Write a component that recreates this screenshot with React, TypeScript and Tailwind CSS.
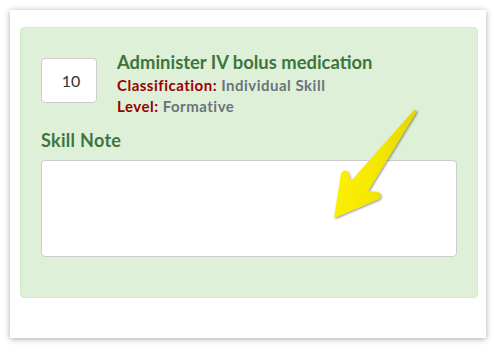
export default function App() {
  return (
    <div className="relative w-[496px] h-[348px] bg-white" style={{ fontFamily: "Lato, 'Noto Sans', sans-serif" }}>
      {/* outer card */}
      <div className="absolute left-[10px] top-[10px] w-[476px] h-[328px] bg-white shadow-[0_1px_6px_rgba(0,0,0,0.35)]">
        <div className="ml-[10px] mt-[17px] w-[458px] h-[271px] bg-[#dff0d8] border border-[#d6e9c6] rounded-[4px] px-[20px] pt-[22px]">
          <div className="flex gap-[20px]">
            <div className="mt-[8px] w-[56px] h-[45px] shrink-0 bg-white border border-[#cccccc] rounded-[4px] flex items-center justify-center pl-[4px] text-[16px] text-[#333333]">
              10
            </div>
            <div>
              <div className="text-[18.4px] leading-[24px] font-bold text-[#3c763d]">Administer IV bolus medication</div>
              <div className="text-[15px] leading-[21px] font-bold tracking-[0.5px] mt-[1px]">
                <span className="text-[#990000]">Classification:</span>{" "}
                <span className="text-[#6b737b]">Individual Skill</span>
              </div>
              <div className="text-[15px] leading-[21px] font-bold tracking-[0.5px]">
                <span className="text-[#990000]">Level:</span>{" "}
                <span className="text-[#6b737b]">Formative</span>
              </div>
            </div>
          </div>
          <div className="mt-[11px] text-[18px] leading-[24px] font-bold text-[#3c763d] tracking-[0.3px]">Skill Note</div>
          <textarea className="mt-[8px] block w-[416px] h-[97px] bg-white border border-[#cccccc] rounded-[4px] resize-none outline-none" />
        </div>
      </div>
      {/* arrow overlay */}
      <svg className="absolute left-0 top-0 pointer-events-none" width="496" height="348" viewBox="0 0 496 348">
        <defs>
          <linearGradient id="ag" x1="0" y1="0" x2="1" y2="0.3">
            <stop offset="0" stopColor="#fff500" />
            <stop offset="0.6" stopColor="#f5e900" />
            <stop offset="1" stopColor="#e0d000" />
          </linearGradient>
          <filter id="sh" x="-20%" y="-20%" width="140%" height="140%">
            <feDropShadow dx="1" dy="1" stdDeviation="0.8" floodColor="#000" floodOpacity="0.45" />
          </filter>
        </defs>
        <path
          d="M414.5 109.5 L417 111 L368 191 L378 192 Q383 195 379 199 L334 218 L341 174 Q344 168 348 172 L351 181 Z"
          fill="url(#ag)"
          filter="url(#sh)"
        />
      </svg>
    </div>
  );
}
